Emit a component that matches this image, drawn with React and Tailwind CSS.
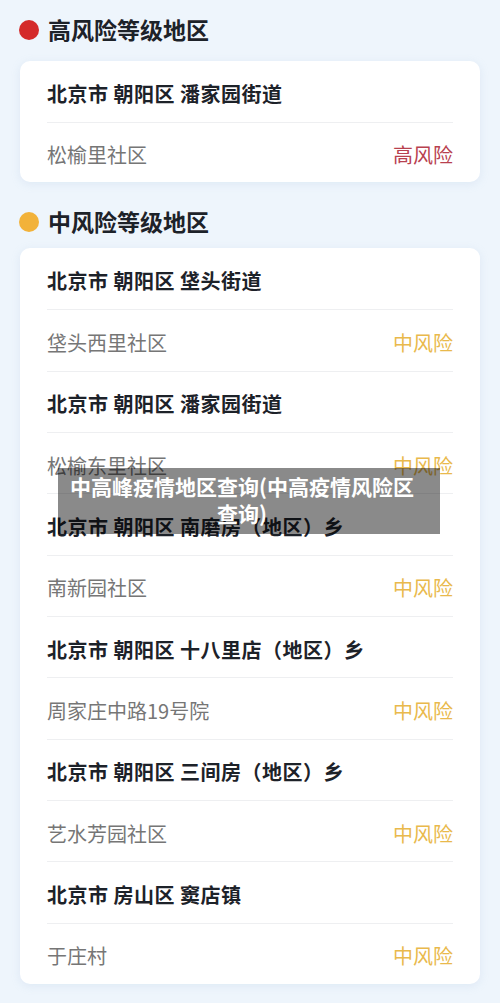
import React from "react";

const HIGH = [{ street: "北京市 朝阳区 潘家园街道", area: "松榆里社区" }];

const MEDIUM = [
  { street: "北京市 朝阳区 垡头街道", area: "垡头西里社区" },
  { street: "北京市 朝阳区 潘家园街道", area: "松榆东里社区" },
  { street: "北京市 朝阳区 南磨房（地区）乡", area: "南新园社区" },
  { street: "北京市 朝阳区 十八里店（地区）乡", area: "周家庄中路19号院" },
  { street: "北京市 朝阳区 三间房（地区）乡", area: "艺水芳园社区" },
  { street: "北京市 房山区 窦店镇", area: "于庄村" },
];

const font = { fontFamily: '"Noto Sans CJK SC", "Noto Sans", sans-serif' };

function Heading({ dot, title, className = "" }) {
  return (
    <div className={`flex items-center gap-[9px] pl-[19px] ${className}`}>
      <span className={`w-[20px] h-[20px] rounded-full ${dot}`} />
      <h2 className="text-[23px] leading-none font-bold text-[#1d2229]">{title}</h2>
    </div>
  );
}

function Card({ items, level, levelColor, rowH }) {
  return (
    <div className="mx-[20px] bg-white rounded-[10px] px-[27px] shadow-[0_2px_10px_rgba(150,180,210,0.18)]">
      {items.map((it, i) => (
        <div key={i}>
          <div
            className={`flex items-center pt-[5px] border-[#eeeff1] ${i > 0 ? "border-t" : ""}`}
            style={{ height: rowH }}
          >
            <span className="text-[20px] font-bold text-[#1d2229] tracking-[0.5px]">{it.street}</span>
          </div>
          <div
            className="flex items-center justify-between pt-[5px] border-t border-[#eeeff1]"
            style={{ height: rowH }}
          >
            <span className="text-[20px] text-[#767676]">{it.area}</span>
            <span className={`text-[20px] ${levelColor}`}>{level}</span>
          </div>
        </div>
      ))}
    </div>
  );
}

export default function App() {
  return (
    <div className="relative w-[500px] h-[1003px] overflow-hidden bg-[#eef5fc]" style={font}>
      <Heading dot="bg-[#d42a2a]" title="高风险等级地区" className="pt-[18px] pb-[20px]" />
      <Card items={HIGH} level="高风险" levelColor="text-[#b8414f]" rowH={60.5} />

      <Heading dot="bg-[#f2b23a]" title="中风险等级地区" className="pt-[28px] pb-[15px]" />
      <Card items={MEDIUM} level="中风险" levelColor="text-[#e9b94c]" rowH={61.33} />

      {/* caption overlay */}
      <div className="absolute left-[58px] top-[468px] w-[382px] h-[66px] bg-[rgba(0,0,0,0.46)] flex items-center justify-center pr-[14px] pb-[3px]">
        <p className="text-white text-[21px] font-bold leading-[27px] text-center whitespace-nowrap">
          中高峰疫情地区查询(中高疫情风险区
          <br />
          查询)
        </p>
      </div>
    </div>
  );
}
